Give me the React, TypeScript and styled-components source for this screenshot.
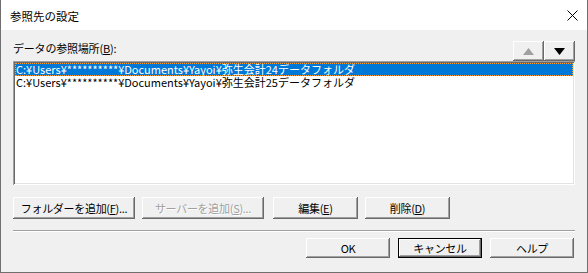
import React from "react";
import styled, { createGlobalStyle, css } from "styled-components";

const GlobalStyle = createGlobalStyle`
  html, body { margin: 0; padding: 0; background: #ffffff; }
  * { box-sizing: border-box; }
  body {
    font-family: "Noto Sans CJK JP", "Noto Sans", "Liberation Sans", sans-serif;
    font-size: 11px;
    color: #000;
  }
`;

const Window = styled.div`
  width: 588px;
  height: 273px;
  display: flex;
  flex-direction: column;
  border: 1px solid #707070;
  border-top: none;
  background: #f0f0f0;
`;

const TitleBar = styled.div`
  height: 30px;
  flex: none;
  background: #ffffff;
  display: flex;
  align-items: center;
  justify-content: space-between;
  padding: 0 9px 0 9px;
`;

const TitleText = styled.span`
  font-size: 11.5px;
  line-height: 14px;
  color: #000;
  margin-top: 2px;
`;

const CloseBtn = styled.div`
  width: 12px;
  height: 12px;
  display: flex;
  align-items: center;
  justify-content: center;
  margin-top: 0px;
`;

const Body = styled.div`
  flex: 1;
  display: flex;
  flex-direction: column;
  padding: 11px 12px 0 12px;
`;

const HeaderRow = styled.div`
  display: flex;
  align-items: flex-start;
  height: 20px;
`;

const Label = styled.span`
  line-height: 14px;
  margin-top: 0px;
  white-space: nowrap;
  letter-spacing: -0.2px;
`;

const Key = styled.span`
  text-decoration: underline;
  text-underline-offset: 1px;
`;

const ArrowGroup = styled.div`
  margin-left: auto;
  display: flex;
`;

const raised = css`
  background: #f0f0f0;
  box-shadow: inset -1px -1px #696969, inset 1px 1px #ffffff,
    inset -2px -2px #a0a0a0, inset 2px 2px #f0f0f0;
`;

const ArrowButton = styled.div`
  ${raised};
  width: 31px;
  height: 20px;
  display: flex;
  align-items: center;
  justify-content: center;
`;

const ListBox = styled.div`
  height: 124px;
  background: #ffffff;
  box-shadow: inset 1px 1px #a0a0a0, inset -1px -1px #ffffff,
    inset 2px 2px #696969, inset -2px -2px #e3e3e3;
  padding: 2px 2px;
  display: flex;
  flex-direction: column;
`;

const ListRow = styled.div<{ $selected?: boolean }>`
  height: 13px;
  line-height: 13px;
  padding-left: 1px;
  white-space: nowrap;
  font-size: 11px;
  letter-spacing: 0px;
  ${(p) =>
    p.$selected
      ? css`
          background: #0078d7;
          color: #ffffff;
          outline: 1px dotted #f7a030;
          outline-offset: -1px;
        `
      : css`
          color: #000;
        `}
`;

const ButtonRow = styled.div`
  display: flex;
  margin-top: 12px;
`;

const PushButton = styled.div<{ $width: number; $disabled?: boolean; $default?: boolean; $height?: number }>`
  ${raised};
  width: ${(p) => p.$width}px;
  height: ${(p) => p.$height ?? 22}px;
  display: flex;
  align-items: center;
  justify-content: center;
  font-size: 11px;
  letter-spacing: -0.3px;
  white-space: nowrap;
  color: ${(p) => (p.$disabled ? "#a0a0a0" : "#000")};
  ${(p) =>
    p.$disabled &&
    css`
      text-shadow: 1px 1px #ffffff;
    `}
  ${(p) =>
    p.$default &&
    css`
      box-shadow: inset 0 0 0 1px #000, inset -2px -2px #696969,
        inset 2px 2px #ffffff, inset -3px -3px #a0a0a0;
    `}
`;

const Spacer = styled.div<{ $w: number }>`
  width: ${(p) => p.$w}px;
  flex: none;
`;

const Separator = styled.div`
  margin-top: 11px;
  height: 2px;
  border-top: 1px solid #a0a0a0;
  border-bottom: 1px solid #ffffff;
`;

const FooterRow = styled.div`
  display: flex;
  justify-content: flex-end;
  margin-top: 6px;
  gap: 8px;
  padding-right: 1px;
`;

const Triangle = ({ up, color }: { up?: boolean; color: string }) => (
  <svg width="11" height="7" viewBox="0 0 11 7">
    {up ? (
      <polygon points="5.5,0 11,7 0,7" fill={color} />
    ) : (
      <polygon points="0,0 11,0 5.5,7" fill={color} />
    )}
  </svg>
);

const rows = [
  "C:¥Users¥**********¥Documents¥Yayoi¥弥生会計24データフォルダ",
  "C:¥Users¥**********¥Documents¥Yayoi¥弥生会計25データフォルダ",
];

export default function App() {
  return (
    <>
      <GlobalStyle />
      <Window>
        <TitleBar>
          <TitleText>参照先の設定</TitleText>
          <CloseBtn>
            <svg width="11" height="11" viewBox="0 0 11 11">
              <path d="M0.5 0.5 L10.5 10.5 M10.5 0.5 L0.5 10.5" stroke="#000" strokeWidth="1" />
            </svg>
          </CloseBtn>
        </TitleBar>
        <Body>
          <HeaderRow>
            <Label>
              データの参照場所(<Key>B</Key>):
            </Label>
            <ArrowGroup>
              <ArrowButton>
                <Triangle up color="#a0a0a0" />
              </ArrowButton>
              <ArrowButton>
                <Triangle color="#000" />
              </ArrowButton>
            </ArrowGroup>
          </HeaderRow>
          <ListBox>
            {rows.map((r, i) => (
              <ListRow key={r} $selected={i === 0}>
                {r}
              </ListRow>
            ))}
          </ListBox>
          <ButtonRow>
            <PushButton $width={122}>
              フォルダーを追加(<Key>F</Key>)...
            </PushButton>
            <Spacer $w={7} />
            <PushButton $width={122} $disabled>
              サーバーを追加(<Key>S</Key>)...
            </PushButton>
            <Spacer $w={9} />
            <PushButton $width={85}>
              編集(<Key>E</Key>)
            </PushButton>
            <Spacer $w={7} />
            <PushButton $width={85}>
              削除(<Key>D</Key>)
            </PushButton>
          </ButtonRow>
          <Separator />
          <FooterRow>
            <PushButton $width={84} $height={20}>
              OK
            </PushButton>
            <PushButton $width={84} $height={20} $default>
              キャンセル
            </PushButton>
            <PushButton $width={84} $height={20}>
              ヘルプ
            </PushButton>
          </FooterRow>
        </Body>
      </Window>
    </>
  );
}
